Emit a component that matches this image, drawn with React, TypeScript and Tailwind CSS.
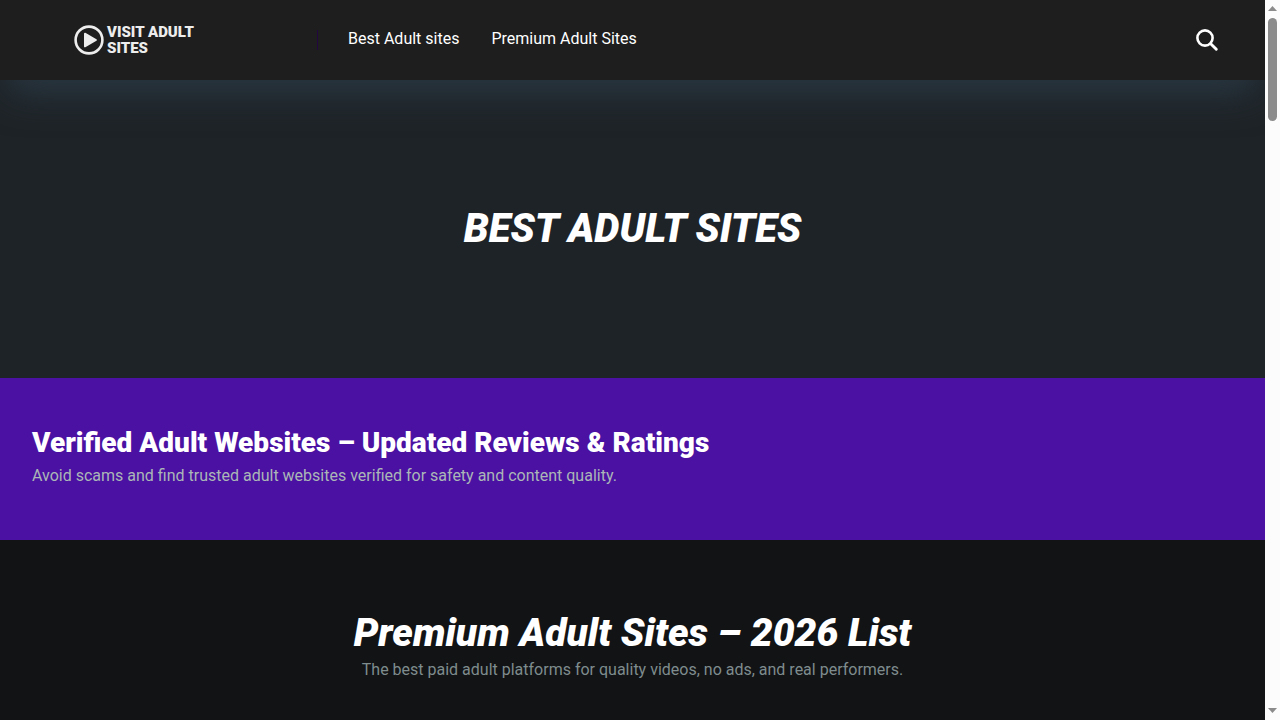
function Logo() {
  return (
    <a href="#home" className="flex items-center gap-[3px] text-[#ededed]">
      <svg viewBox="0 0 30 30" className="size-[30px]" aria-hidden="true">
        <circle cx="15" cy="15" r="13.4" fill="none" stroke="currentColor" strokeWidth="2.6" />
        <path
          d="M10.9 8.6v12.8L22 15z"
          fill="currentColor"
          stroke="currentColor"
          strokeWidth="1.8"
          strokeLinejoin="round"
        />
      </svg>
      <span className="flex flex-col text-[15px] leading-4 font-black">
        <span>VISIT ADULT</span>
        <span>SITES</span>
      </span>
    </a>
  );
}

function Header() {
  return (
    <header className="relative z-10 flex h-20 items-center bg-[#1e1e1e] pr-[46px] pl-[74px] shadow-[0_20px_38px_-8px_#2a3944]">
      <div className="w-[243px]">
        <Logo />
      </div>
      <nav className="flex h-5 items-center gap-8 border-l border-[#22063f] pb-[2px] pl-[30px] text-base text-white">
        <a href="#best">Best Adult sites</a>
        <a href="#premium">Premium Adult Sites</a>
      </nav>
      <button type="button" aria-label="Search" className="ml-auto text-white">
        <svg viewBox="0 0 24 24" className="size-6" aria-hidden="true" fill="none" stroke="currentColor">
          <circle cx="10" cy="10" r="7.6" strokeWidth="2.6" />
          <path d="M15.7 15.7l5.6 5.6" strokeWidth="2.9" strokeLinecap="round" />
        </svg>
      </button>
    </header>
  );
}

function Scrollbar() {
  return (
    <div className="flex w-[15px] shrink-0 flex-col items-center bg-[#fcfcfc]" aria-hidden="true">
      <svg viewBox="0 0 15 18" className="h-[18px] w-[15px]">
        <path d="M3 11h9L7.5 6z" fill="#8b8b8b" />
      </svg>
      <div className="h-[103px] w-[9px] rounded-full bg-[#8b8b8b]" />
      <svg viewBox="0 0 15 15" className="mt-auto h-[15px] w-[15px]">
        <path d="M3 3h9L7.5 8z" fill="#8b8b8b" />
      </svg>
    </div>
  );
}

export default function App() {
  return (
    <div className="flex h-screen overflow-hidden bg-[#111315] font-['Roboto',sans-serif] text-base">
      <div className="min-w-0 flex-1 overflow-hidden">
        <Header />
        <main>
          <section id="best" className="bg-[#1e2327] py-[124px] text-center">
            <h1 className="text-[40px] leading-[50px] font-black text-white italic">BEST ADULT SITES</h1>
          </section>
          <section className="bg-[#4a11a2] px-8 py-12">
            <h2 className="text-[28px] leading-[34px] font-black text-white">
              Verified Adult Websites – Updated Reviews &amp; Ratings
            </h2>
            <p className="py-1 leading-6 text-[#abb7b7]">
              Avoid scams and find trusted adult websites verified for safety and content quality.
            </p>
          </section>
          <section id="premium" className="px-8 pt-[68px] text-center">
            <h2 className="text-[39px] leading-[50px] font-black text-white italic">
              Premium Adult Sites – 2026 List
            </h2>
            <p className="leading-6 text-[#7f8c8d]">
              The best paid adult platforms for quality videos, no ads, and real performers.
            </p>
          </section>
        </main>
      </div>
      <Scrollbar />
    </div>
  );
}
